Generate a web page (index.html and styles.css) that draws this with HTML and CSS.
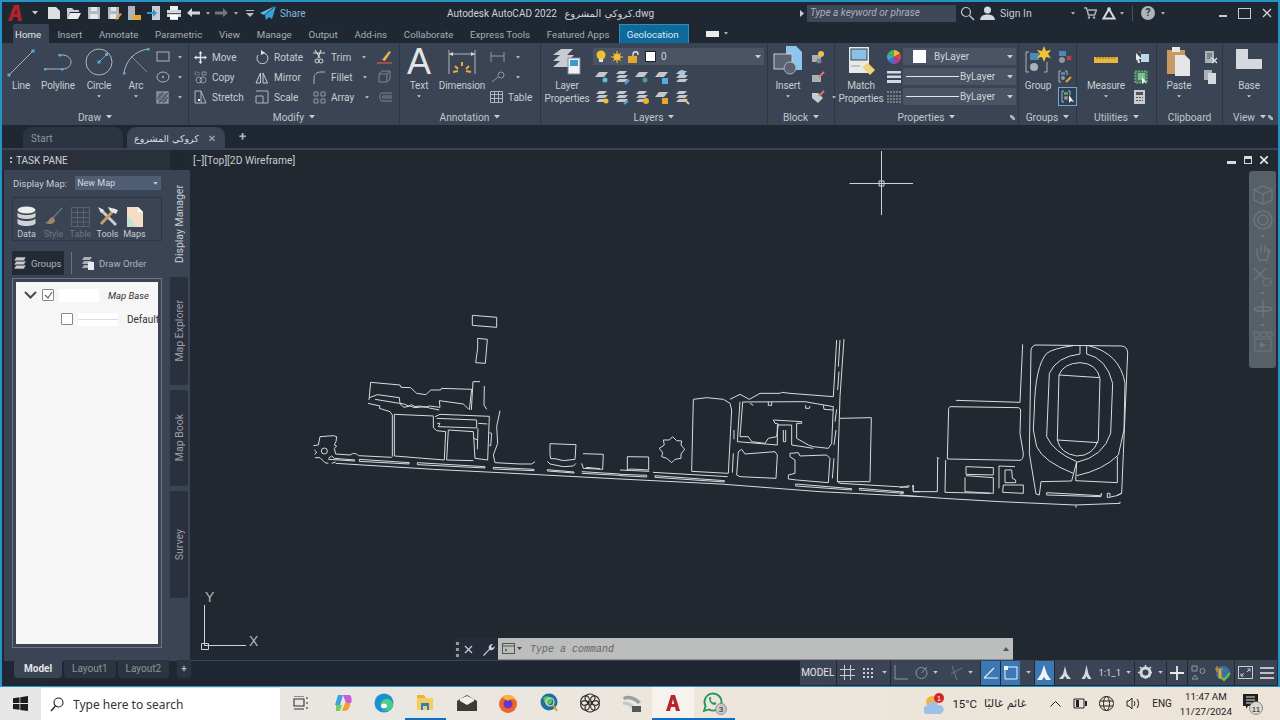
FILE: index.html
```html
<!DOCTYPE html>
<html lang="en">
<head>
<meta charset="utf-8">
<title>Autodesk AutoCAD 2022</title>
<link rel="stylesheet" href="styles.css">
</head>
<body>
<svg class="defs" width="0" height="0">
  <symbol id="stack" viewBox="0 0 16 16"><path d="M5 2h8l-3 3H2zM5 6h9l-3 3H2zM5 10h9l-3 3H2z" fill="#c4c8cd"/></symbol>
  <symbol id="flat" viewBox="0 0 16 16"><path d="M5 3h9l-4 5H1z" fill="#c4c8cd"/></symbol>
  <symbol id="caret" viewBox="0 0 6 4"><path d="M0 0h6L3 3.5z" fill="#c8ccd2"/></symbol>
</svg>
<div class="window">
  <header class="titlebar">
    <div class="qat">
      <svg class="logo" width="16" height="18" viewBox="0 0 16 18"><path d="M1 17 7 1h5l3 16h-4l-.6-4H6.500l-1.500 4zM7.500 10H10L9.300 5z" fill="#b3222a"/></svg>
      <svg class="caret" width="6" height="4"><use href="#caret"/></svg>
      <svg class="qi first" width="16" height="16" viewBox="0 0 16 16"><path d="M2 2h8l4 4v8H2z" fill="#dcdfe2"/></svg>
      <svg class="qi" width="16" height="16" viewBox="0 0 16 16"><path d="M1 3h5l2 2h5v2H4l-3 7z" fill="#c9ccd0"/><path d="M4 8h11l-3 6H1z" fill="#e8e9ea"/></svg>
      <svg class="qi" width="16" height="16" viewBox="0 0 16 16"><path d="M2 2h12v12H2z" fill="#b5b9be"/><path d="M5 2h6v4H5zM4 9h8v5H4z" fill="#e5e6e8"/></svg>
      <svg class="qi" width="16" height="16" viewBox="0 0 16 16"><path d="M2 2h11v12H2z" fill="#b5b9be"/><path d="M5 2h5v4H5zM4 9h6v5H4z" fill="#e5e6e8"/><path d="M9 14l5-6 2 1-5 6z" fill="#e0a24a"/></svg>
      <svg class="qi" width="16" height="16" viewBox="0 0 16 16"><path d="M2 1h7v14H2z" fill="#aeb3b9"/><path d="M7 10h8v5H7z" fill="#e5a72f"/></svg>
      <svg class="qi" width="16" height="16" viewBox="0 0 16 16"><path d="M6 1h8v14H6z" fill="#c9ccd0"/><path d="M1 7h6V4l4 4-4 4V9H1z" fill="#2a9ad0"/></svg>
      <svg class="qi" width="16" height="16" viewBox="0 0 16 16"><path d="M4 1h8v4H4z" fill="#eee"/><path d="M1 5h14v7h-3v3H4v-3H1z" fill="#d5d8db"/><path d="M4 10h8v4H4z" fill="#fff"/><path d="M1 8h14v1H1z" fill="#555"/></svg>
      <svg class="qi" width="15" height="16" viewBox="0 0 15 16"><path d="M6 3 1 8l5 4V9.500h8V6.500H6z" fill="#d4d7da"/></svg>
      <svg class="caret" width="4" height="3"><use href="#caret"/></svg>
      <svg class="qi dim" width="15" height="16" viewBox="0 0 15 16"><path d="M9 3l5 5-5 4V9.500H1V6.500h8z" fill="#6e7680"/></svg>
      <svg class="caret" width="4" height="3"><use href="#caret"/></svg>
      <svg class="qi more" width="8" height="8" viewBox="0 0 8 8"><path d="M0 1h8v1H0zM0 4h8L4 8z" fill="#b9bdc2"/></svg>
      <svg class="qi" width="16" height="14" viewBox="0 0 16 14"><path d="M16 0 5 9l1 5 3-3 3 2z" fill="#3aa2d8"/><path d="M15 0 0 7l4 2z" fill="#5cb7e6"/></svg>
      <span class="share">Share</span>
    </div>
    <div class="app-title">Autodesk AutoCAD 2022 &nbsp;&nbsp;<span class="ar">كروكي المشروع</span>.dwg</div>
    <div class="infocenter">
      <svg class="arrow-r" width="4" height="7" viewBox="0 0 4 7"><path d="M0 0l4 3.500L0 7z" fill="#c8ccd2"/></svg>
      <div class="search-input">Type a keyword or phrase</div>
      <svg class="mag" width="15" height="15" viewBox="0 0 15 15"><circle cx="6" cy="6" r="4.500" fill="none" stroke="#c4c8cd" stroke-width="1.200"/><path d="M9.500 9.500 14 14" stroke="#c4c8cd" stroke-width="1.400"/></svg>
      <svg class="user" width="15" height="14" viewBox="0 0 15 14"><circle cx="7.500" cy="4" r="3.500" fill="#d5d8dc"/><path d="M0 14c1-5 4-5.500 7.500-5.500S14 9 15 14z" fill="#d5d8dc"/></svg>
      <span class="signin">Sign In</span>
      <svg class="caret c1" width="4" height="3"><use href="#caret"/></svg>
      <svg class="cart" width="13" height="12" viewBox="0 0 13 12"><path d="M0 1h2.500l2 7h6l2-5H4" fill="none" stroke="#aeb3b9" stroke-width="1.500"/><circle cx="5" cy="10.500" r="1.200" fill="#aeb3b9"/><circle cx="10" cy="10.500" r="1.200" fill="#aeb3b9"/></svg>
      <svg class="tri" width="14" height="13" viewBox="0 0 14 13"><path d="M7 2 1.500 11.500h11z" fill="none" stroke="#d5d8dc" stroke-width="2"/><circle cx="7" cy="2" r="1.800" fill="#d5d8dc"/></svg>
      <svg class="caret c2" width="4" height="3"><use href="#caret"/></svg>
      <span class="vsep"></span>
      <span class="help">?</span>
      <svg class="caret c3" width="4" height="3"><use href="#caret"/></svg>
    </div>
    <div class="winbtns">
      <span class="wmin"></span><span class="wmax"></span>
      <svg width="10" height="10" viewBox="0 0 10 10"><path d="M1 1l8 8M9 1l-8 8" stroke="#d5d8dc" stroke-width="1.200"/></svg>
    </div>
  </header>

  <nav class="tabs">
    <span class="tab active">Home</span><span class="tab">Insert</span><span class="tab">Annotate</span><span class="tab">Parametric</span><span class="tab">View</span><span class="tab">Manage</span><span class="tab">Output</span><span class="tab">Add-ins</span><span class="tab">Collaborate</span><span class="tab">Express Tools</span><span class="tab">Featured Apps</span><span class="tab geo">Geolocation</span>
    <span class="tabmini"><span class="tabmini-box"></span><svg width="4" height="3"><use href="#caret"/></svg></span>
  </nav>

  <section class="ribbon">
    <div class="panel p-draw">
      <div class="pbody">
        <div class="lg w30"><svg width="30" height="32" viewBox="0 0 30 32"><path d="M3 29 27 5" stroke="#aeb4bb"/><rect x="1.500" y="27.500" width="3" height="3" fill="#59a9d8"/><rect x="25.500" y="3.500" width="3" height="3" fill="#59a9d8"/></svg><span>Line</span></div>
        <div class="lg w44"><svg width="32" height="32" viewBox="0 0 32 32"><path d="M3 23H20C32 23 32 9 20 9h-4" fill="none" stroke="#aeb4bb"/><g fill="#59a9d8"><rect x="2" y="22" width="2.500" height="2.500"/><rect x="19" y="22" width="2.500" height="2.500"/><rect x="17" y="8" width="2.500" height="2.500"/></g></svg><span>Polyline</span></div>
        <div class="lg w36"><svg width="30" height="32" viewBox="0 0 30 32"><circle cx="15" cy="16" r="13" fill="none" stroke="#aeb4bb"/><path d="M15 16l8-8" stroke="#59a9d8"/><rect x="13.500" y="14.500" width="3" height="3" fill="#59a9d8"/><rect x="21" y="7" width="3" height="3" fill="#59a9d8"/></svg><span>Circle</span><svg class="dd" width="4" height="3"><use href="#caret"/></svg></div>
        <div class="lg w38"><svg width="30" height="32" viewBox="0 0 30 32"><path d="M3 27C5 14 14 5 27 3" fill="none" stroke="#aeb4bb"/><path d="M10 10 26 26" stroke="#7e8791"/><g fill="#59a9d8"><rect x="2" y="26" width="2.500" height="2.500"/><rect x="26" y="2" width="2.500" height="2.500"/></g></svg><span>Arc</span><svg class="dd" width="4" height="3"><use href="#caret"/></svg></div>
        <div class="col c-draw">
          <div class="sm"><svg width="14" height="12" viewBox="0 0 14 12"><rect x="1" y="1" width="12" height="9" fill="none" stroke="#aeb4bb"/></svg><svg class="sc" width="4" height="3"><use href="#caret"/></svg></div>
          <div class="sm"><svg width="14" height="12" viewBox="0 0 14 12"><ellipse cx="7" cy="6" rx="6" ry="5" fill="none" stroke="#aeb4bb"/><circle cx="7" cy="6" r="1.200" fill="#59a9d8"/></svg><svg class="sc" width="4" height="3"><use href="#caret"/></svg></div>
          <div class="sm"><svg width="14" height="13" viewBox="0 0 14 13"><rect x="1" y="1" width="11" height="11" fill="#6d7782" stroke="#aeb4bb"/><path d="M1 8l6-7M3 12l9-10M7 12l5-6" stroke="#3a4454"/></svg><svg class="sc" width="4" height="3"><use href="#caret"/></svg></div>
        </div>
      </div>
      <div class="ptitle">Draw<svg width="6" height="4"><use href="#caret"/></svg></div>
    </div>

    <div class="panel p-modify">
      <div class="pbody rows3">
        <div class="sm"><svg width="13" height="13" viewBox="0 0 13 13"><path d="M6.500 0l2 2.500h-1.300V5.800h3.300V4.500l2.500 2-2.500 2V7.200H7.200v3.300h1.300l-2 2.500-2-2.500h1.300V7.200H2.500v1.300L0 6.500l2.500-2v1.300h3.300V2.500H4.500z" fill="#e3e5e8"/></svg><span>Move</span></div>
        <div class="sm"><svg width="14" height="14" viewBox="0 0 14 14"><path d="M9 3A5.500 5.500 0 1 1 3 5" fill="none" stroke="#c8ccd2"/><path d="M6 0l4 3-4 2z" fill="#e3e5e8"/></svg><span>Rotate</span></div>
        <div class="sm"><svg width="13" height="14" viewBox="0 0 13 14"><path d="M2 0l5 8M8 0 5 8M0 3h12" stroke="#d5d8dc" stroke-width="1.100"/><circle cx="4" cy="11" r="2" fill="none" stroke="#d5d8dc"/><circle cx="8" cy="11" r="2" fill="none" stroke="#d5d8dc"/></svg><span>Trim</span><svg class="sc g9" width="4" height="3"><use href="#caret"/></svg></div>
        <div class="sm"><svg width="15" height="14" viewBox="0 0 15 14"><path d="M5 10 12 1l2 1-6 9z" fill="#e7b04b"/><path d="M0 13h15" stroke="#c75a41" stroke-width="1.300"/></svg></div>

        <div class="sm"><svg width="13" height="13" viewBox="0 0 13 13"><path d="M1 1h4v3H1z" fill="none" stroke="#8f97a1" stroke-dasharray="1 1"/><circle cx="5" cy="9" r="3" fill="none" stroke="#8f97a1"/><circle cx="9" cy="9" r="3" fill="none" stroke="#8f97a1"/><path d="M8 1h4v3H8z" fill="none" stroke="#8f97a1"/></svg><span>Copy</span></div>
        <div class="sm"><svg width="14" height="13" viewBox="0 0 14 13"><path d="M5.500 2 1 12h4.500zM8 2l4.500 10H8z" fill="none" stroke="#c8ccd2"/></svg><span>Mirror</span></div>
        <div class="sm"><svg width="13" height="14" viewBox="0 0 13 14"><path d="M1 14V8c0-4 3-6 7-6h4" fill="none" stroke="#aeb4bb"/></svg><span>Fillet</span><svg class="sc g9" width="4" height="3"><use href="#caret"/></svg></div>
        <div class="sm"><svg width="15" height="14" viewBox="0 0 15 14"><path d="M2 4h8v8H2zM2 4l3-3h8v8l-3 3M10 4l3-3" fill="none" stroke="#7d8590"/></svg></div>

        <div class="sm"><svg width="13" height="14" viewBox="0 0 13 14"><path d="M1 1h6v12H1zM7 1l5 12H7" fill="none" stroke="#aeb4bb"/><rect x="4" y="9" width="2" height="2" fill="#fff"/></svg><span>Stretch</span></div>
        <div class="sm"><svg width="14" height="14" viewBox="0 0 14 14"><path d="M1 6h7v7H1zM1 1h12v12H8" fill="none" stroke="#aeb4bb"/></svg><span>Scale</span></div>
        <div class="sm"><svg width="13" height="13" viewBox="0 0 13 13"><path d="M1 1h4v4H1zM8 1h4v4H8zM1 8h4v4H1zM8 8h4v4H8z" fill="none" stroke="#8f97a1"/></svg><span>Array</span><svg class="sc g9" width="4" height="3"><use href="#caret"/></svg></div>
        <div class="sm"><svg width="15" height="12" viewBox="0 0 15 12"><path d="M15 2H5C2 2 2 10 5 10h10M15 5H6C5 5 5 7 6 7h9" fill="none" stroke="#7d8590"/></svg></div>
      </div>
      <div class="ptitle">Modify<svg width="6" height="4"><use href="#caret"/></svg></div>
    </div>

    <div class="panel p-annot">
      <div class="pbody">
        <div class="lg w36"><span class="bigA">A</span><span>Text</span><svg class="dd" width="4" height="3"><use href="#caret"/></svg></div>
        <div class="lg w50"><svg width="28" height="32" viewBox="0 0 28 32"><path d="M1 4v24M27 4v24" stroke="#aeb4bb"/><path d="M1 8h26" stroke="#aeb4bb"/><path d="M1 8l4-2v4zM27 8l-4-2v4z" fill="#d5d8dc"/><path d="M14 16v4M7 20l3 3M21 20l-3 3M5 26l5-1M23 26l-5-1" stroke="#e6ad3c" stroke-width="2"/></svg><span>Dimension</span></div>
        <div class="col c-annot">
          <div class="sm"><svg width="15" height="12" viewBox="0 0 15 12"><path d="M1 1v10M14 1v10M1 5h13" stroke="#8f97a1"/></svg><svg class="sc g9" width="4" height="3"><use href="#caret"/></svg></div>
          <div class="sm"><svg width="15" height="13" viewBox="0 0 15 13"><path d="M2 11 8 6" stroke="#8f97a1"/><circle cx="11" cy="4" r="3" fill="none" stroke="#8f97a1"/></svg><svg class="sc g9" width="4" height="3"><use href="#caret"/></svg></div>
          <div class="sm"><svg width="13" height="12" viewBox="0 0 13 12"><path d="M.5.500h12v11H.500zM.5 3.500h12M.5 7.500h12M4.500.5v11M8.500.5v11" fill="none" stroke="#aeb4bb"/></svg><span>Table</span></div>
        </div>
      </div>
      <div class="ptitle">Annotation<svg width="6" height="4"><use href="#caret"/></svg></div>
    </div>

    <div class="panel p-layers">
      <div class="pbody">
        <div class="lg w52"><svg width="30" height="32" viewBox="0 0 30 32"><path d="M9 3h12l-6 6H1zM8 9h14l-6 6H1zM8 15h14l-6 6H1z" fill="#c8ccd2"/><rect x="16" y="12" width="12" height="16" fill="#f0f1f2" stroke="#7e8791"/><rect x="18" y="14" width="8" height="6" fill="#3b9ad0"/></svg><span>Layer</span><span>Properties</span></div>
        <div class="layerctl">
          <div class="combo combo-layer">
            <svg width="10" height="13" viewBox="0 0 10 13"><circle cx="5" cy="5" r="4.500" fill="#f0c12c"/><rect x="3" y="9" width="4" height="3" fill="#dfe1e3"/></svg>
            <svg width="12" height="12" viewBox="0 0 12 12"><circle cx="6" cy="6" r="3.500" fill="#f0c12c"/><path d="M6 0v12M0 6h12M2 2l8 8M10 2l-8 8" stroke="#f0c12c"/></svg>
            <svg width="12" height="12" viewBox="0 0 12 12"><rect y="5" width="9" height="7" fill="#e5a72f"/><path d="M5 5V3c0-3 5-3 5 0v1" fill="none" stroke="#e5e6e8" stroke-width="1.300"/></svg>
            <span class="swatch"></span><span class="lname">0</span>
            <svg class="comboc" width="6" height="4"><use href="#caret"/></svg>
          </div>
          <div class="layerrow">
            <svg width="16" height="16"><use href="#flat"/><circle cx="11" cy="11" r="2.500" fill="#58c4d8"/></svg>
            <svg width="16" height="16"><use href="#stack"/><path d="M11 15l4-4" stroke="#59a9d8" stroke-width="2"/></svg>
            <svg width="16" height="16"><use href="#flat"/><circle cx="11" cy="11" r="2.500" fill="#4ba08c"/></svg>
            <svg width="16" height="16"><use href="#flat"/><rect x="8" y="9" width="6" height="6" fill="#4fb0e0"/></svg>
            <svg width="16" height="16"><use href="#stack"/><circle cx="8" cy="4" r="3" fill="#9fc7e6"/></svg>
          </div>
          <div class="layerrow">
            <svg width="16" height="16"><use href="#stack"/><circle cx="12" cy="12" r="2.500" fill="#f0c12c"/></svg>
            <svg width="16" height="16"><use href="#stack"/><path d="M10 15l4-3" stroke="#59a9d8" stroke-width="2"/></svg>
            <svg width="16" height="16"><use href="#stack"/><circle cx="12" cy="12" r="3" fill="#e8b13a"/></svg>
            <svg width="16" height="16"><use href="#flat"/><rect x="8" y="9" width="6" height="6" fill="#e5a72f"/></svg>
            <svg width="16" height="16"><use href="#stack"/><path d="M10 10l5 5" stroke="#e5c87a" stroke-width="2"/></svg>
          </div>
        </div>
      </div>
      <div class="ptitle">Layers<svg width="6" height="4"><use href="#caret"/></svg></div>
    </div>

    <div class="panel p-block">
      <div class="pbody">
        <div class="lg w38"><svg width="30" height="32" viewBox="0 0 30 32"><path d="M13 0h10l6 6v18H13z" fill="#8cc6ee"/><rect x="1" y="8" width="18" height="15" fill="#5a6370" stroke="#c8ccd2"/><circle cx="17" cy="22" r="6" fill="#5a6370" stroke="#aeb4bb"/></svg><span>Insert</span><svg class="dd" width="4" height="3"><use href="#caret"/></svg></div>
        <div class="col c-block">
          <div class="sm"><svg width="14" height="14" viewBox="0 0 14 14"><rect x="1" y="5" width="9" height="7" fill="#aab0b7"/><circle cx="10" cy="4" r="3" fill="#ecc352"/><circle cx="8" cy="11" r="2.500" fill="#7d8590"/></svg></div>
          <div class="sm"><svg width="14" height="14" viewBox="0 0 14 14"><rect x="1" y="5" width="9" height="7" fill="#aab0b7"/><path d="M8 7l5-5" stroke="#d87a68" stroke-width="2"/></svg></div>
          <div class="sm"><svg width="14" height="14" viewBox="0 0 14 14"><path d="M1 3h6l5 5-5 5-6-5z" fill="#c8ccd2"/><path d="M8 6l5-5" stroke="#d87a68" stroke-width="2"/></svg><svg class="sc g6" width="4" height="3"><use href="#caret"/></svg></div>
        </div>
      </div>
      <div class="ptitle">Block<svg width="6" height="4"><use href="#caret"/></svg></div>
    </div>

    <div class="panel p-props">
      <div class="pbody">
        <div class="lg w50"><svg width="30" height="32" viewBox="0 0 30 32"><rect x="3" y="1" width="20" height="26" fill="#e8e9ea"/><rect x="5" y="3" width="16" height="11" fill="#8bc0e6" stroke="#3a4454"/><path d="M16 21l6-4 7 7-5 5z" fill="#eed47a"/><path d="M5 20h9" stroke="#999"/></svg><span>Match</span><span>Properties</span></div>
        <div class="propcol">
          <svg width="14" height="14" viewBox="0 0 14 14"><path d="M7 7V0a7 7 0 0 1 6 3.500z" fill="#e8b93a"/><path d="M7 7l6-3.500a7 7 0 0 1 0 7z" fill="#d44"/><path d="M7 7l6 3.500A7 7 0 0 1 7 14z" fill="#b040a0"/><path d="M7 7v7a7 7 0 0 1-6-3.500z" fill="#4070d0"/><path d="M7 7 1 10.500a7 7 0 0 1 0-7z" fill="#40a8c0"/><path d="M7 7 1 3.500A7 7 0 0 1 7 0z" fill="#50b050"/></svg>
          <svg width="14" height="14" viewBox="0 0 14 14"><path d="M0 1h14v2.500H0zM0 5.500h14V8H0zM0 10h14v3H0z" fill="#d5d8dc"/></svg>
          <svg width="14" height="14" viewBox="0 0 14 14"><path d="M0 2h14M0 6h14M0 9h14M0 12h14" stroke="#aeb4bb" stroke-dasharray="2 1"/></svg>
        </div>
        <div class="combos">
          <div class="combo"><span class="swatch big"></span><span class="cname">ByLayer</span><svg class="comboc" width="6" height="4"><use href="#caret"/></svg></div>
          <div class="combo"><span class="lw"></span><span class="cname2">ByLayer</span><svg class="comboc" width="6" height="4"><use href="#caret"/></svg></div>
          <div class="combo"><span class="lw"></span><span class="cname2">ByLayer</span><svg class="comboc" width="6" height="4"><use href="#caret"/></svg></div>
        </div>
      </div>
      <div class="ptitle">Properties<svg width="6" height="4"><use href="#caret"/></svg><svg class="launch" width="5" height="5" viewBox="0 0 5 5"><path d="M0 0h2L5 3V5H3L0 2z" fill="#aeb4bb"/></svg></div>
    </div>

    <div class="panel p-groups">
      <div class="pbody">
        <div class="lg w34"><svg width="28" height="32" viewBox="0 0 28 32"><path d="M5 6H2v20h3M20 26h3V16" fill="none" stroke="#aeb4bb"/><rect x="6" y="7" width="9" height="7" fill="#4f87b8"/><circle cx="10" cy="21" r="4" fill="#aab0b7"/><path d="M20 0l2 5 5-1-3 4 3 4-5-1-2 5-2-5-5 1 3-4-3-4 5 1z" fill="#f1c33c"/></svg><span>Group</span></div>
        <div class="col c-groups">
          <div class="sm"><svg width="14" height="14" viewBox="0 0 14 14"><rect x="1" y="1" width="7" height="5" fill="#4f87b8"/><circle cx="4" cy="10" r="3" fill="#8f97a1"/><path d="M9 6l4 4M13 6l-4 4" stroke="#d44" stroke-width="1.500"/></svg></div>
          <div class="sm"><svg width="14" height="14" viewBox="0 0 14 14"><path d="M3 1H1v11h2M7 1h2v4" fill="none" stroke="#aeb4bb"/><rect x="3" y="2" width="4" height="3" fill="#4f87b8"/><circle cx="5" cy="8" r="2" fill="#8f97a1"/><path d="M8 12l5-5" stroke="#e5a72f" stroke-width="2"/></svg></div>
          <div class="sm sel"><svg width="14" height="14" viewBox="0 0 14 14"><path d="M3 1H1v11h2M7 1h2v4" fill="none" stroke="#aeb4bb"/><rect x="3" y="2" width="4" height="3" fill="#4fa07a"/><circle cx="5" cy="8" r="2" fill="#8f97a1"/><path d="M8 5v8l2-2 3 1z" fill="#f2f2f2"/></svg></div>
        </div>
      </div>
      <div class="ptitle">Groups<svg width="6" height="4"><use href="#caret"/></svg></div>
    </div>

    <div class="panel p-util">
      <div class="pbody">
        <div class="lg w50 top-gap"><svg width="26" height="32" viewBox="0 0 26 32"><rect x="1" y="11" width="24" height="6" fill="#e8b93a"/><path d="M4 11v2M7 11v2M10 11v2M13 11v2M16 11v2M19 11v2M22 11v2" stroke="#8a6a1a"/></svg><span>Measure</span><svg class="dd" width="4" height="3"><use href="#caret"/></svg></div>
        <div class="col c-util">
          <div class="sm"><svg width="15" height="14" viewBox="0 0 15 14"><path d="M2 3l6 6-3 0 1 4-2 0-1-4-1 2z" fill="#e8e9ea"/><rect x="7" y="4" width="8" height="8" fill="#bcd9ec"/><path d="M4 0l1 2 2-.5-1 1.500z" fill="#f1c33c"/></svg></div>
          <div class="sm"><svg width="14" height="14" viewBox="0 0 14 14"><rect x="1" y="1" width="12" height="12" fill="#4c7a5a" stroke="#6fc08a" stroke-dasharray="2 1"/><rect x="4" y="3" width="7" height="7" fill="#7bc08f"/><path d="M8 7v7l2-2 3 1z" fill="#f2f2f2"/></svg></div>
          <div class="sm"><svg width="11" height="14" viewBox="0 0 11 14"><rect width="11" height="14" fill="#c8ccd2"/><rect x="2" y="2" width="7" height="3" fill="#555"/><path d="M2 7h2v1H2zM5 7h2v1H5zM8 7h1v1H8zM2 10h2v1H2zM5 10h2v1H5zM8 10h1v1H8z" fill="#555"/></svg></div>
        </div>
      </div>
      <div class="ptitle">Utilities<svg width="6" height="4"><use href="#caret"/></svg></div>
    </div>

    <div class="panel p-clip">
      <div class="pbody">
        <div class="lg w44"><svg width="24" height="32" viewBox="0 0 24 32"><rect x="0" y="4" width="18" height="24" fill="#c79a63"/><rect x="5" y="1" width="8" height="5" fill="#e5e6e8"/><path d="M8 9h10l5 5v16H8z" fill="#e5e6e8"/></svg><span>Paste</span><svg class="dd" width="4" height="3"><use href="#caret"/></svg></div>
        <div class="col c-clip">
          <div class="sm"><svg width="14" height="14" viewBox="0 0 14 14"><rect x="1" y="1" width="9" height="12" fill="#aab0b7"/><path d="M3 4h5M3 6h5M3 8h3" stroke="#555"/><path d="M8 8l5 5M13 8l-5 5" stroke="#e5e6e8" stroke-width="1.200"/></svg></div>
          <div class="sm"><svg width="12" height="14" viewBox="0 0 12 14"><rect x="0" y="0" width="8" height="10" fill="#aab0b7"/><rect x="4" y="3" width="8" height="11" fill="#d5d8dc"/></svg></div>
        </div>
      </div>
      <div class="ptitle">Clipboard</div>
    </div>

    <div class="panel p-view">
      <div class="pbody">
        <div class="lg w52"><svg width="28" height="32" viewBox="0 0 28 32"><path d="M1 3h12v10h14v10H1z" fill="#d5d8dc"/></svg><span>Base</span><svg class="dd" width="4" height="3"><use href="#caret"/></svg></div>
      </div>
      <div class="ptitle">View<svg width="6" height="4"><use href="#caret"/></svg><svg class="launch" width="5" height="5" viewBox="0 0 5 5"><path d="M0 0h2L5 3V5H3L0 2z" fill="#aeb4bb"/></svg></div>
    </div>
  </section>

  <div class="doctabs">
    <span class="doctab">Start</span>
    <span class="doctab cur"><span class="ar">كروكي المشروع</span><span class="dx">✕</span></span>
    <span class="docplus">+</span>
  </div>

  <main class="workspace">
    <aside class="taskpane">
      <div class="tp-title"><span class="tp-grip"></span>TASK PANE</div>
      <div class="tp-main">
        <div class="tp-body">
          <div class="dm-row"><span>Display Map:</span><span class="dm-select">New Map<svg width="5" height="3"><use href="#caret"/></svg></span></div>
          <div class="dm-tools">
            <div class="dmt"><svg width="19" height="22" viewBox="0 0 19 22"><ellipse cx="9.500" cy="4" rx="9" ry="3.500" fill="#eceded"/><path d="M.5 6v4c0 4 18 4 18 0V6c0 4-18 4-18 0zM.5 12v5c0 4 18 4 18 0v-5c0 4-18 4-18 0z" fill="#d0d2d5"/></svg><span>Data</span></div>
            <div class="dmt off"><svg width="20" height="22" viewBox="0 0 20 22"><path d="M18 2 9 12" stroke="#6d757f" stroke-width="1.300"/><path d="M9 11c-4 0-4 5-8 6 5 2 10 1 10-3z" fill="#a08668"/></svg><span>Style</span></div>
            <div class="dmt off"><svg width="19" height="22" viewBox="0 0 19 22"><path d="M.5 1.500h18v19H.5zM.5 6.500h18M.5 11.500h18M.5 16h18M6.500 1.500v19M12.500 1.500v19" fill="none" stroke="#596270"/></svg><span>Table</span></div>
            <div class="dmt"><svg width="22" height="22" viewBox="0 0 22 22"><path d="M4 4l15 15" stroke="#c8ccd2" stroke-width="3"/><path d="M18 3 4 18" stroke="#c79a63" stroke-width="3"/><path d="M11 1l10 3-2 4-6-3z" fill="#e5e6e8"/><path d="M1 1l6 3-3 3z" fill="#e5e6e8"/></svg><span>Tools</span></div>
            <div class="dmt"><svg width="18" height="22" viewBox="0 0 18 22"><path d="M1 1h11l5 5v15H1z" fill="#f5dcc7"/><path d="M1 11c5 0 5 5 9 10H1z" fill="#bfe3d5"/><path d="M12 1v5h5z" fill="#fff"/></svg><span>Maps</span></div>
          </div>
          <div class="dm-tabs">
            <span class="dm-tab on"><svg width="14" height="14" viewBox="0 0 14 14"><path d="M3 1h10l-2 4H1zM3 5h10l-2 4H1zM3 9h10l-2 4H1z" fill="#c8ccd2" stroke="#2a3038" stroke-width=".6"/></svg>Groups</span>
            <span class="dm-sep"></span>
            <span class="dm-tab"><svg width="14" height="14" viewBox="0 0 14 14"><path d="M3 1h8l-2 3H1zM3 5h8l-2 3H1zM3 9h8l-2 3H1z" fill="#aab0b7"/><rect x="7" y="6" width="6" height="8" fill="#e8e9ea"/></svg>Draw Order</span>
          </div>
          <div class="tree-frame">
            <div class="tree">
              <div class="tr r1"><svg width="13" height="8" viewBox="0 0 13 8"><path d="M1 1l5.500 5.500L12 1" fill="none" stroke="#454a50" stroke-width="2"/></svg><span class="cb chk"><svg width="9" height="8" viewBox="0 0 9 8"><path d="M1 4l3 3 4-6" fill="none" stroke="#666" stroke-width="1.200"/></svg></span><span class="white-swatch"></span><em>Map Base</em></div>
              <div class="tr r2"><span class="cb"></span><span class="white-swatch line"></span><span class="def">Default</span></div>
            </div>
          </div>
        </div>
        <div class="tp-side">
          <span class="stab on"><b>Display Manager</b></span>
          <span class="stab s2"><b>Map Explorer</b></span>
          <span class="stab s3"><b>Map Book</b></span>
          <span class="stab s4"><b>Survey</b></span>
        </div>
      </div>
    </aside>

    <section class="canvas">
      <div class="vp-label">[−][Top][2D Wireframe]</div>
      <svg class="drawing" width="1086" height="510" viewBox="190 150 1086 510">
        <g class="cad" transform="translate(300 300) scale(.33333)">
          <path d="M517 46 555 49 590 52V82L517 76ZM533 115 562 118 556 190 527 188 533 145Z"/>
          <path d="M207 300 212 247 300 255 303 262 332 263 350 280 378 284 392 270 422 270 424 265 515 268 508 330"/>
          <path d="M208 293 232 284 298 293 300 310 312 312 325 318 335 314 345 320 360 318 375 322 388 318 420 322 418 302 490 312 505 327"/>
          <path d="M204 310 240 318 238 325 270 335 277 345V470M225 298 298 310 312 322 330 318 345 323 375 320 388 324 418 330"/>
          <path d="M514 330 519 245H540M553 258 552 315 560 328M600 332 590 380 593 430 580 465 585 488 660 492 695 492 705 485"/>
          <path d="M283 343 400 348V383L410 392 437 395 433 480 283 468Z"/>
          <path d="M405 350 420 343 568 349 563 480 525 475 520 395 445 390 440 480 520 482M410 355 530 360V384L415 380 420 370 412 370"/>
          <path d="M535 370 562 372M534 385 532 448M522 415 532 420M568 398 575 400 572 438 568 435"/>
          <path d="M40 437 55 435 60 410 100 407 110 410 108 425 103 435 110 438 103 445 107 462 150 465 160 460 170 462 175 467 275 472"/>
          <circle cx="73" cy="453" r="9"/>
          <path d="M43 450 50 456 44 464M45 473H60L75 488 85 490M85 475 95 468 103 475 165 480M95 490 107 486M85 478 165 483"/>
          <path d="M107 490 400 508 600 518 960 537"/>
          <path d="M178 478 328 488 327 492 178 484ZM352 488 555 500V504L352 494ZM580 502 702 508V512L580 507ZM742 509 822 516V519L742 513ZM845 515 960 522M845 520 960 526"/>
          <path d="M750 431 828 434 825 478 790 482 765 476H752L750 463ZM742 484 750 492 790 500 820 498 828 490"/>
          <path d="M849 461 910 463 908 508 850 505 845 490M858 502 900 506"/>
        </g>
        <g class="cad" transform="translate(620 330) scale(.33333)">
          <path d="M0 447 300 462 600 485 900 500"/>
          <path d="M105 437 313 452V456L105 442ZM527 462 695 476V480L527 468ZM718 475 850 486V490L718 480ZM0 433 80 436V441L0 437Z"/>
          <path d="M22 380 86 381V420L30 417 22 420ZM0 420 88 424"/>
          <path d="M158 320 148 330 130 330 133 345 118 355 128 368 125 380 140 385 155 398 165 388 183 385 183 372 194 358 183 345 185 333 170 332Z"/>
          <path d="M215 424 220 208 260 203 310 208 330 220 335 240 325 430ZM99 427 323 440"/>
          <path d="M330 208 360 193 388 208 420 190H480L485 187 510 190 640 200 650 30"/>
          <path d="M672 27 660 200 652 455H750L754 263 660 265M653 455 660 460 865 472 868 468M880 465V485H900"/>
          <path d="M368 216 555 215 640 230 635 340 625 355 580 350 565 345 530 325V280H545V275L460 270 465 280 475 282 470 320 445 325 435 340 395 335 385 320H360Z"/>
          <path d="M360 215 352 335 472 345V285H515V345L580 355M490 300V335H497V300"/>
          <path d="M342 300V328M340 370 337 428M642 385 637 445M648 300 642 345M650 238 645 275M657 125 653 180M660 30 655 110"/>
          <path d="M355 365 365 358 375 372 465 365 472 375 468 445 360 440 350 435Z"/>
          <path d="M510 370 535 368 540 378 620 375 630 385 625 458 530 450 505 447V435L525 430V390L510 380Z"/>
          <path d="M390 220 400 226M445 216V226H455V216M557 226V235H568L570 228M610 226 612 238 640 240"/>
        </g>
        <g class="cad" transform="translate(900 330) scale(.33333)">
          <path d="M405 45 665 48Q683 50 683 70L670 370 665 490 650 497 622 503V490M405 45Q395 48 393 60L388 370 408 492 418 495 423 455 515 453"/>
          <path d="M540 45V72Q470 80 448 130L440 320Q460 365 530 395L515 453"/>
          <path d="M520 47Q460 55 440 70 405 110 403 240L400 300 410 350Q430 395 520 430"/>
          <path d="M560 45V72Q620 85 638 160L632 310Q610 380 530 397L527 452 652 458V380"/>
          <path d="M565 47Q660 70 675 160L672 300 655 375Q610 420 530 437"/>
          <path d="M477 135Q490 100 540 98 590 100 600 145L595 330Q580 378 530 378 480 370 472 330ZM477 135 600 143M472 330 595 338"/>
          <path d="M168 211 360 217 368 43"/>
          <path d="M150 230 355 233Q362 235 362 240L360 310 370 370Q370 390 360 391L142 387 146 235Z"/>
          <path d="M137 390 135 487 270 490M198 410 280 413V435L198 433ZM195 442V485L280 490V443L198 437M297 408 345 410M297 408V475"/>
          <path d="M315 420H335L337 445 347 450V458H315ZM310 465H370V490L308 487Z"/>
          <path d="M110 383 118 385M113 385 112 485H40L38 465M0 473 28 467M0 490 10 485"/>
          <path d="M0 495 130 505 300 515 525 525 660 520V515M528 525V533"/>
          <path d="M440 488 600 497 605 490 603 500 440 495ZM622 490H630V500M650 497 665 490"/>
        </g>
        <path class="xhair" d="M849.500 183.500H913M881.500 151V215M879 181h5v5h-5z"/>
        <path class="ucs" d="M204.500 605V645.500H246M201.500 643.500h7v6h-7z"/>
        <text class="ucs-t" x="205" y="602">Y</text>
        <text class="ucs-t" x="249" y="646">X</text>
      </svg>
      <div class="vp-ctrl">
        <span class="vmin"></span><span class="vmax"></span>
        <svg width="8" height="8" viewBox="0 0 8 8"><path d="M0 0l8 8M8 0 0 8" stroke="#e5e6e8" stroke-width="1.600"/></svg>
      </div>
      <div class="navbar">
        <svg width="20" height="20" viewBox="0 0 20 20"><path d="M10 1 19 5v10l-9 4-9-4V5zM1 5l9 4 9-4M10 9v10" fill="none" stroke="#6e767e" stroke-width="1.200"/></svg>
        <svg width="20" height="20" viewBox="0 0 20 20"><circle cx="10" cy="10" r="9" fill="none" stroke="#6e767e" stroke-width="1.400"/><circle cx="10" cy="10" r="5" fill="none" stroke="#6e767e" stroke-width="1.400"/></svg>
        <i class="navdot"></i>
        <svg width="20" height="20" viewBox="0 0 20 20"><path d="M4 11V6M8 10V3M12 10V3M15 11V6M4 11l2 7h8l3-10" fill="none" stroke="#6e767e" stroke-width="1.400"/></svg>
        <svg width="20" height="20" viewBox="0 0 20 20"><path d="M1 1l12 12M13 1 1 13" stroke="#6e767e" stroke-width="1.200"/><circle cx="14" cy="15" r="4" fill="none" stroke="#6e767e" stroke-width="1.200"/></svg>
        <i class="navdot"></i>
        <svg width="20" height="20" viewBox="0 0 20 20"><path d="M10 1v18M1 10c2-3 16-3 18 0-2 3-16 3-18 0z" fill="none" stroke="#6e767e" stroke-width="1.400"/></svg>
        <i class="navdot"></i>
        <svg width="20" height="22" viewBox="0 0 20 22"><path d="M1 1h5v5H1zM8 1h5v5H8zM15 1h4v5h-4zM2 8h16v12H2z" fill="none" stroke="#6e767e"/><path d="M7 11l6 3-6 3z" fill="#6e767e"/></svg>
      </div>
      <div class="cmdline">
        <div class="cmd-tools">
          <span class="cmd-grip"></span>
          <svg width="9" height="9" viewBox="0 0 9 9"><path d="M1 1l7 7M8 1 1 8" stroke="#c8ccd2" stroke-width="1.300"/></svg>
          <svg class="wrench" width="13" height="13" viewBox="0 0 13 13"><path d="M1 12 7 6C6 3 8 1 11 1L9 3.500 10.500 5 13 3c0 3-3 5-5.500 4L2 13z" fill="#c8ccd2"/></svg>
        </div>
        <div class="cmd-input">
          <svg width="13" height="11" viewBox="0 0 13 11"><rect x=".5" y=".5" width="12" height="10" fill="none" stroke="#555"/><path d="M.5 3h12M3 6l2 1-2 1" fill="none" stroke="#555"/></svg>
          <svg width="5" height="3"><path d="M0 0h5L2.500 3z" fill="#444"/></svg>
          <span class="cmd-text">Type a command</span>
          <svg class="cmd-up" width="6" height="4"><path d="M0 4h6L3 0z" fill="#555"/></svg>
        </div>
      </div>
    </section>
  </main>

  <footer class="statusbar">
    <div class="ltabs">
      <span class="ltab on">Model</span><span class="ltab">Layout1</span><span class="ltab">Layout2</span><span class="ltab plus">+</span>
    </div>
    <div class="stools">
      <span class="sg sg-model"><span class="model">MODEL</span></span>
      <span class="sg"><svg width="15" height="15" viewBox="0 0 15 15"><path d="M4.500 0v15M10.500 0v15M0 4.500h15M0 10.500h15" stroke="#c8ccd2"/></svg><svg class="dots" width="12" height="12" viewBox="0 0 12 12"><path d="M1 1h2v2H1zM5 1h2v2H5zM9 1h2v2H9zM1 5h2v2H1zM5 5h2v2H5zM9 5h2v2H9zM1 9h2v2H1zM5 9h2v2H5zM9 9h2v2H9z" fill="#c8ccd2"/></svg><svg class="sd wide" width="5" height="3"><use href="#caret"/></svg></span>
      <span class="sg polar"><svg width="14" height="15" viewBox="0 0 14 15"><path d="M1 0v14h13" fill="none" stroke="#8f97a1"/></svg><svg class="ml" width="13" height="13" viewBox="0 0 13 13"><circle cx="6.500" cy="7" r="5.500" fill="none" stroke="#8f97a1"/><path d="M6.500 7 12 1" stroke="#8f97a1"/></svg><svg class="sd" width="5" height="3"><use href="#caret"/></svg><svg class="ml2" width="13" height="14" viewBox="0 0 13 14"><path d="M2 0l5 14M12 2 1 8" stroke="#6f7782"/></svg><svg class="sd" width="5" height="3"><use href="#caret"/></svg></span>
      <span class="hl"><svg width="14" height="13" viewBox="0 0 14 13"><path d="M0 12h14M0 12 10 2" stroke="#eef3f8" stroke-width="1.200"/></svg></span>
      <span class="hl h2"><svg width="14" height="14" viewBox="0 0 14 14"><path d="M1 1h12v12H1z" fill="none" stroke="#eef3f8"/><path d="M0 0h4v4H0z" fill="#eef3f8"/></svg></span>
      <span class="sg gap-l"><svg class="sd" width="5" height="3"><use href="#caret"/></svg></span>
      <span class="hl h3"><svg width="15" height="16" viewBox="0 0 15 16"><path d="M7 0 10 9l4 6H9L7 12 5 15H0l4-6z" fill="#eef3f8"/></svg></span>
      <span class="sg"><svg width="15" height="15" viewBox="0 0 15 15"><path d="M7 1 9 9l4 5H9L7 11 5 14H1l4-5z" fill="#d5d8dc"/></svg><svg class="ml" width="13" height="15" viewBox="0 0 13 15"><path d="M6.500 0 8.500 9l3 5H8L6.500 11 5 14H1.500l3-5z" fill="#d5d8dc"/></svg><span class="scale">1:1_1</span><svg class="sd" width="5" height="3"><use href="#caret"/></svg></span>
      <span class="sg"><svg width="15" height="15" viewBox="0 0 15 15"><circle cx="7.500" cy="7.500" r="4.500" fill="none" stroke="#d5d8dc" stroke-width="3"/><path d="M7.500 0v15M0 7.500h15M2 2l11 11M13 2 2 13" stroke="#d5d8dc" stroke-width="1.500" stroke-dasharray="2.500 9"/></svg><svg class="sd" width="5" height="3"><use href="#caret"/></svg></span>
      <span class="sg"><svg width="14" height="14" viewBox="0 0 14 14"><path d="M7 0v14M0 7h14" stroke="#e8e9ea" stroke-width="1.800"/></svg></span>
      <span class="sg"><svg width="15" height="15" viewBox="0 0 15 15"><path d="M1 1h5v5H1z" fill="none" stroke="#8f97a1"/><circle cx="11.500" cy="6" r="2.500" fill="none" stroke="#8f97a1"/><path d="M4 10l3 4H1z" fill="none" stroke="#8f97a1"/></svg><svg class="ml" width="18" height="18" viewBox="0 0 18 18"><circle cx="10" cy="9" r="7" fill="#3c6fa5"/><path d="M2 5h8M4 2v6M6 6h2v8H6z" fill="#e5a72f" stroke="#e5a72f"/><path d="M8 13l3 3 6-7" fill="none" stroke="#6fc040" stroke-width="2"/></svg></span>
      <span class="sg"><svg width="15" height="13" viewBox="0 0 15 13"><rect x=".5" y=".5" width="14" height="12" fill="none" stroke="#c8ccd2"/><path d="M3 10l3-3M3 10V7.500M3 10h2.500M12 3 9 6M12 3v2.500M12 3H9.500" stroke="#c8ccd2"/></svg><svg class="ml" width="14" height="12" viewBox="0 0 14 12"><path d="M0 1h14M0 6h14M0 11h14" stroke="#e8e9ea" stroke-width="1.600"/></svg></span>
    </div>
  </footer>
</div>

<div class="taskbar">
  <span class="start"><svg width="15" height="15" viewBox="0 0 15 15"><path d="M0 2.200 6.500 1.300V7H0zM7.300 1.200 15 0V7H7.300zM0 7.900H6.500V13.800L0 12.900zM7.300 7.900H15V15L7.300 13.900z" fill="#1d1d1d"/></svg></span>
  <div class="searchbox"><svg width="14" height="15" viewBox="0 0 14 15"><circle cx="8.500" cy="5.500" r="4.500" fill="none" stroke="#222" stroke-width="1.100"/><path d="M5.500 9 1 14" stroke="#222" stroke-width="1.300"/></svg><span>Type here to search</span></div>
  <div class="tb-apps">
    <span class="tbi"><svg width="15" height="14" viewBox="0 0 15 14"><path d="M1 0h10M1 13h10M1 3h10v7H1zM14 1v2M14 6v2M14 11v2" fill="none" stroke="#333" stroke-width="1.100"/></svg></span>
    <span class="tbi"><svg width="20" height="20" viewBox="0 0 20 20"><path d="M5 2h5L7 12H2z" fill="#3f9fe0"/><path d="M10 2h6c3 0 3 6 2 8l-5 0z" fill="#c65ce0"/><path d="M3 12h6l-2 6H3z" fill="#6fcf60"/><path d="M9 18l3-8h5c1 3-2 8-5 8z" fill="#f0a030"/></svg></span>
    <span class="tbi"><svg width="20" height="20" viewBox="0 0 20 20"><circle cx="10" cy="10" r="9.500" fill="#1b8fd0"/><path d="M19 12c-1 5-8 8-12 5 3 1 6 0 6-3H7c-2-5 3-9 7-8 4 1 5 4 5 6z" fill="#47d080"/><ellipse cx="10" cy="13" rx="3" ry="2.500" fill="#fff"/></svg></span>
    <span class="tbi on"><svg width="18" height="17" viewBox="0 0 18 17"><path d="M1 1h7l2 3H1z" fill="#e8b43a"/><path d="M1 4h16v12H1z" fill="#f6cf5a"/><path d="M5 9h8v7H5z" fill="#2a80c8"/><path d="M7 12h4v4H7z" fill="#f6cf5a"/></svg></span>
    <span class="tbi"><svg width="20" height="16" viewBox="0 0 20 16"><path d="M0 6 10 0l10 6v10H0z" fill="#3f3c38"/><path d="M3 4 10 1l7 3v2l-7 4-7-4z" fill="#f2efe8"/></svg></span>
    <span class="tbi"><svg width="20" height="20" viewBox="0 0 20 20"><circle cx="10" cy="11" r="9" fill="#f0642a"/><circle cx="10" cy="11" r="4.500" fill="#6a35c8"/><path d="M4 4c4-4 12-2 14 4-3-3-6-2-8 0z" fill="#f7b733"/></svg></span>
    <span class="tbi"><svg width="20" height="20" viewBox="0 0 20 20"><circle cx="10" cy="9" r="8.500" fill="#1c6f9f"/><path d="M4 5c3-3 8-2 9 2s-4 6-6 4-2-4-3-6z" fill="#55c078"/><circle cx="11" cy="9" r="4" fill="none" stroke="#f3e6a0" stroke-width="1.200"/><path d="M14 12l4 6" stroke="#d8a030" stroke-width="2"/></svg></span>
    <span class="tbi"><svg width="20" height="20" viewBox="0 0 20 20"><g fill="none" stroke="#2b2b2b" stroke-width="1.200"><ellipse cx="10" cy="5" rx="5" ry="4"/><ellipse cx="10" cy="15" rx="5" ry="4"/><ellipse cx="5" cy="7.500" rx="4" ry="5" transform="rotate(30 5 7.500)"/><ellipse cx="15" cy="7.500" rx="4" ry="5" transform="rotate(-30 15 7.500)"/><ellipse cx="5" cy="12.500" rx="4" ry="5" transform="rotate(-30 5 12.500)"/><ellipse cx="15" cy="12.500" rx="4" ry="5" transform="rotate(30 15 12.500)"/></g></svg></span>
    <span class="tbi"><svg width="20" height="20" viewBox="0 0 20 20"><path d="M1 4c7-3 13 0 18 5l-3 2C12 7 6 5 2 7z" fill="#9aa0a6"/><path d="M1 9c5-1 9 1 12 5l-3 2c-2-3-6-5-9-4z" fill="#c4c8cc"/><rect x="10" y="13" width="9" height="6" fill="#555"/></svg></span>
    <span class="tbi on act"><svg width="16" height="18" viewBox="0 0 16 18"><path d="M1 17 6 1h4l5 16h-4l-1-4H6l-1 4zM6.800 10h2.400L8 5z" fill="#b8232c"/></svg></span>
    <span class="tbi on"><svg width="26" height="24" viewBox="0 0 26 24"><path d="M3 20 4.500 15A8.500 8.500 0 1 1 8 18.500z" fill="none" stroke="#1f9a55" stroke-width="1.800"/><path d="M8 7c0 4 3 7 6 7l1.500-2-2-1-1 .8C11 11 10 10 9.500 8.500L10.300 7.500l-1-2z" fill="#1f9a55"/><circle cx="20" cy="18" r="5.500" fill="#c9c9c7" stroke="#666" stroke-width=".6"/><text x="20" y="21" class="badge-t">3</text></svg></span>
  </div>
  <div class="tray">
    <span class="weather"><svg width="21" height="22" viewBox="0 0 21 22"><circle cx="8" cy="9" r="6" fill="#f3b23c"/><path d="M3 21a4 4 0 0 1 0-8 6 6 0 0 1 11-1 4.500 4.500 0 0 1 2 9z" fill="#9cc1e8"/><circle cx="15" cy="5" r="5" fill="#d3252a"/><text x="15" y="8" class="badge-w">1</text></svg><span class="temp">15°C</span><span class="cond ar">غائم غالبًا</span></span>
    <svg class="chev" width="11" height="6" viewBox="0 0 11 6"><path d="M.5 5.500l5-5 5 5" fill="none" stroke="#222"/></svg>
    <svg width="14" height="11" viewBox="0 0 14 11"><path d="M1 1h10v9H1z" fill="none" stroke="#222"/><path d="M3 2h3v7H3z" fill="#222"/><path d="M12 3h2v5h-2z" fill="#222"/></svg>
    <svg width="15" height="15" viewBox="0 0 15 15"><circle cx="7.500" cy="7.500" r="7" fill="none" stroke="#222"/><ellipse cx="7.500" cy="7.500" rx="3" ry="7" fill="none" stroke="#222"/><path d="M1 5h13M1 10h13" stroke="#222"/></svg>
    <svg width="14" height="13" viewBox="0 0 14 13"><path d="M1 4h2l3-3v11L3 9H1z" fill="none" stroke="#222"/><path d="M8 4c1 1 1 4 0 5M11 2c2 2 2 7 0 9" fill="none" stroke="#222"/></svg>
    <span class="eng">ENG</span>
    <span class="clock"><span>11:47 AM</span><span>11/27/2024</span></span>
    <span class="notif"><svg width="24" height="24" viewBox="0 0 24 24"><path d="M2 2h15v12h-10l-2 3v-3H2z" fill="#1f1f1f"/><path d="M5 5h9M5 8h9M5 11h6" stroke="#e8e4dc"/><circle cx="15" cy="16" r="6.500" fill="#d9d7d3" stroke="#555" stroke-width=".6"/><text x="15" y="19.500" class="badge-t">11</text></svg></span>
  </div>
</div>
</body>
</html>
```

FILE: styles.css
```css
* { box-sizing: border-box; }
html, body { margin: 0; padding: 0; width: 1280px; height: 720px; overflow: hidden; }
body { font-family: Roboto, "Liberation Sans", "DejaVu Sans", sans-serif; font-size: 10px; color: #c8ccd2; background: #e8e4dc; }
svg { display: block; flex: none; }
.defs { position: absolute; }
.ar { font-family: "DejaVu Sans", sans-serif; }

.window { width: 1280px; height: 687px; border: 2px solid #2593c8; border-width: 2px 2px 1px 2px; background: #1f2631; display: flex; flex-direction: column; }

/* title bar */
.titlebar { height: 22px; display: flex; align-items: center; background: #1f2733; flex: none; }
.qat { display: flex; align-items: center; padding-left: 5px; width: 440px; }
.logo { margin-right: 4px; }
.qi { margin-left: 4px; }
.qi.first { margin-left: 8px; }
.qat .caret { margin-left: 5px; }
.qi.more { margin-left: 8px; margin-right: 2px; }
.share { margin-left: 4px; color: #7fb9de; font-size: 10px; }
.app-title { font-size: 10px; color: #cfd3d8; margin-left: 5px; width: 353px; white-space: nowrap; }
.infocenter { display: flex; align-items: center; }
.arrow-r { margin-right: 3px; }
.search-input { width: 149px; height: 17px; background: #3f4858; font-style: italic; font-size: 10px; color: #aab0b8; padding: 2px 3px; }
.mag { margin-left: 4px; }
.user { margin-left: 5px; }
.signin { margin-left: 5px; width: 71px; color: #c8ccd2; font-size: 10.500px; }
.cart { margin-left: 9px; }
.tri { margin-left: 5px; }
.c2 { margin-left: 4px; }
.vsep { width: 1px; height: 15px; background: #4a5260; margin-left: 8px; }
.help { width: 14px; height: 14px; border-radius: 50%; background: #b0b4b9; color: #333; font-weight: 700; font-size: 10px; text-align: center; line-height: 14px; margin-left: 8px; }
.c3 { margin-left: 6px; }
.winbtns { display: flex; align-items: center; margin-left: auto; gap: 11px; padding-right: 6px; }
.wmin { width: 8px; height: 2px; background: #c8ccd2; margin-top: 6px; }
.wmax { width: 13px; height: 11px; border: 1px solid #c8ccd2; }

/* ribbon tabs */
.tabs { height: 19px; display: flex; align-items: center; flex: none; background: #1f2733; padding-left: 5px; font-size: 9.700px; }
.tab { height: 19px; line-height: 21px; padding: 0 8.400px; color: #a7adb5; white-space: nowrap; }
.tab.active { background: #3a4454; color: #e4e6e9; border-radius: 2px 2px 0 0; padding: 0 6px 0 2px; margin-left: 6px; width: 36px; }
.tab.geo { background: #0f6a9c; color: #dcebf4; border: 1px solid #2e8dbd; border-bottom: 0; line-height: 19px; margin-left: 1px; padding: 0 7px; width: 70px; }
.tabmini { display: flex; align-items: center; gap: 5px; margin-left: 17px; }
.tabmini-box { width: 13px; height: 6px; background: #e8e9ea; }

/* ribbon */
.ribbon { height: 82px; flex: none; display: flex; background: #3a4454; }
.panel { display: flex; flex-direction: column; border-right: 1px solid #2d3542; flex: none; height: 82px; }
.p-draw { width: 187px; } .p-modify { width: 211px; } .p-annot { width: 141px; } .p-layers { width: 227px; }
.p-block { width: 67px; } .p-props { width: 184px; } .p-groups { width: 58px; } .p-util { width: 80px; } .p-clip { width: 66px; } .p-view { width: 53px; border-right: 0; }
.pbody { flex: 1; display: flex; padding-top: 3px; min-height: 0; }
.ptitle { height: 14px; margin-bottom: 1px; display: flex; align-items: center; justify-content: center; gap: 5px; position: relative; color: #c2c6cc; font-size: 10.200px; flex: none; }
.launch { position: absolute; right: 3px; top: 5px; }

.lg { display: flex; flex-direction: column; align-items: center; flex: none; line-height: 13px; font-size: 10px; letter-spacing: -.1px; white-space: nowrap; }
.lg > svg:first-child { margin-bottom: 1px; }
.lg .dd { margin-top: 3px; }
.w30 { width: 30px; margin-left: 4px; } .w34 { width: 34px; } .w36 { width: 36px; } .w38 { width: 38px; } .w44 { width: 44px; } .w50 { width: 50px; } .w52 { width: 52px; }
.p-draw .w36 { margin-left: 1px; }
.p-annot .w36 { margin-left: 1px; }
.bigA { font-family: "Liberation Sans", sans-serif; font-size: 36px; line-height: 32px; height: 33px; color: #e2e4e7; letter-spacing: 0; }
.col { display: grid; grid-auto-rows: 20px; flex: none; padding-top: 1px; }
.sm { display: flex; align-items: center; gap: 5px; white-space: nowrap; font-size: 10px; height: 20px; }
.sm .sc { margin-left: 3px; }
.sm .g9 { margin-left: 6px; }
.sm .g6 { margin-left: 2px; }
.c-draw { margin-left: 1px; }
.rows3 { display: grid; grid-template-columns: 61px 58px 64px auto; grid-auto-rows: 20px; padding: 4px 0 0 5px; align-content: start; }
.c-annot { margin-left: 3px; }
.layerctl { padding-top: 2px; display: flex; flex-direction: column; width: 171px; }
.layerctl .combo { margin-bottom: 2px; }
.combo { height: 17px; background: #4a5464; display: flex; align-items: center; position: relative; flex: none; margin-bottom: 3px; color: #d0d3d8; }
.combo-layer { gap: 5px; padding-left: 3px; }
.comboc { position: absolute; right: 3px; top: 7px; }
.swatch { width: 11px; height: 11px; background: #fff; border: 1px solid #222; flex: none; }
.swatch.big { width: 13px; height: 13px; margin-left: 10px; border: 0; }
.cname { margin-left: 8px; }
.cname2 { margin-left: 1px; }
.lw { width: 53px; height: 1px; background: #e5e6e8; margin-left: 3px; }
.layerrow { display: flex; gap: 4px; height: 20px; align-items: center; padding-left: 1px; }
.p-block .w38 { margin-left: 1px; }
.c-block { margin-left: 4px; }
.p-props .w50 { margin-left: 1px; }
.propcol { display: grid; grid-auto-rows: 20px; align-items: center; margin-left: 1px; padding-top: 1px; align-content: start; }
.combos { margin-left: 2px; width: 113px; padding-top: 2px; }
.p-groups .w34 { margin-left: 2px; }
.c-groups { margin-left: 3px; }
.sel { border: 1px solid #6aa8d8; background: #2f3f52; width: 19px; padding-left: 2px; height: 19px; }
.c-util { margin-left: 3px; }
.p-util .w50 { margin-left: 4px; }
.c-clip { margin-left: 3px; }

/* document tabs */
.doctabs { height: 23px; flex: none; display: flex; align-items: center; background: #1f2733; padding-left: 21px; font-size: 10px; gap: 4px; }
.doctab { width: 100px; height: 21px; margin-top: 2px; background: #2c3441; border-radius: 9px 9px 0 0; display: flex; align-items: center; padding: 2px 0 0 8px; color: #8d949d; }
.doctab.cur { background: #3a4454; width: 98px; color: #d8dbdf; gap: 9px; padding-left: 7px; }
.doctab .ar { font-size: 9.500px; }
.dx { color: #aeb4bb; font-size: 10px; }
.docplus { color: #aeb4bb; font-weight: 700; font-size: 13px; margin-left: 10px; }

/* workspace */
.workspace { flex: 1; display: flex; min-height: 0; border-top: 2px solid #3a4454; }
.taskpane { width: 188px; display: flex; flex-direction: column; flex: none; background: #1f2733; }
.tp-title { height: 20px; flex: none; display: flex; align-items: center; color: #d0d3d8; font-size: 10px; background: #2a303b; width: 168px; gap: 4px; padding-left: 8px; }
.tp-grip { width: 2px; height: 6px; border-left: 2px dotted #aeb4bb; }
.tp-main { flex: 1; display: flex; min-height: 0; }
.tp-body { width: 166px; margin-left: 2px; background: #3a4454; display: flex; flex-direction: column; padding: 3px 8px 13px; flex: none; }
.dm-row { display: flex; align-items: center; gap: 8px; height: 16px; margin: 2px 0 0 1px; color: #c8ccd2; font-size: 9.500px; white-space: nowrap; }
.dm-select { width: 86px; height: 14px; background: #4f5e73; color: #d5d8dc; display: flex; align-items: center; justify-content: space-between; padding: 0 3px 0 2px; font-size: 9px; }
.dm-tools { margin-top: 6px; height: 44px; border: 1px solid #2f3743; display: flex; padding: 8px 0 0 0; }
.dmt { display: flex; flex-direction: column; align-items: center; gap: 1px; font-size: 9px; color: #c8ccd2; width: 27px; flex: none; }
.dmt.off { color: #6d7581; }
.dm-tabs { display: flex; align-items: center; margin-top: 10px; height: 24px; font-size: 9.500px; }
.dm-tab { display: flex; align-items: center; gap: 4px; height: 24px; padding: 0 3px 0 1px; color: #aeb4bb; white-space: nowrap; }
.dm-tab.on { background: #232a34; width: 52px; }
.dm-sep { width: 1px; height: 22px; background: #6b737e; margin: 0 7px; }
.dm-tab:last-child { padding-left: 2px; }
.tree-frame { flex: 1; margin-top: 3px; border: 1px solid #6d7581; padding: 3px; min-height: 0; }
.tree { background: #f6f6f6; height: 100%; color: #333; font-size: 10px; overflow: hidden; white-space: nowrap; padding-top: 1px; }
.tr { display: flex; align-items: center; height: 24px; }
.r1 { padding: 0 0 0 8px; gap: 5px; }
.r2 { padding-left: 45px; gap: 5px; }
.cb { width: 12px; height: 12px; border: 1px solid #888; background: #fff; display: flex; align-items: center; justify-content: center; border-radius: 1px; flex: none; }
.white-swatch { width: 40px; height: 13px; background: #fff; margin-right: 4px; flex: none; }
.white-swatch.line { background: linear-gradient(#fff 6px, #ddd 6px, #ddd 7px, #fff 7px); }
.r1 em { font-size: 9.500px; }
.tp-side { flex: 1; display: flex; flex-direction: column; background: #3a4454; min-height: 0; }
.stab { width: 18px; background: #2a313c; border-radius: 0 3px 3px 0; display: flex; align-items: center; justify-content: center; color: #9aa0a8; font-size: 10.500px; flex: none; }
.stab b { font-weight: 400; writing-mode: vertical-rl; transform: rotate(180deg); white-space: nowrap; }
.stab.on { height: 98px; background: #3a4454; color: #c8ccd2; padding-top: 10px; }
.s2 { height: 108px; margin-top: 9px; }
.s3 { height: 96px; margin-top: 5px; }
.s4 { height: 107px; margin-top: 5px; }

/* canvas */
.canvas { flex: 1; position: relative; background: #212830; min-width: 0; border-bottom: 1px solid #3a4454; }
.vp-label { position: absolute; left: 3px; top: 4px; font-size: 10.300px; color: #c8ccd2; }
.drawing { position: absolute; left: 0; top: 0; }
.cad path, .cad circle { fill: none; stroke: #d9dbde; stroke-width: 1; vector-effect: non-scaling-stroke; stroke-linejoin: round; }
.xhair, .ucs { fill: none; stroke: #cfd2d6; stroke-width: 1; }
.ucs-t { fill: #b4b8bc; font-family: "Liberation Sans", sans-serif; font-size: 14px; }
.vp-ctrl { position: absolute; right: 10px; top: 6px; display: flex; align-items: center; gap: 8px; }
.vmin { width: 9px; height: 3px; background: #d8dadd; margin-top: 5px; }
.vmax { width: 8px; height: 8px; border: 1.500px solid #d8dadd; border-top-width: 3px; }
.navbar { position: absolute; right: 2px; top: 21px; width: 27px; height: 197px; background: #575f67; border-radius: 3px; display: flex; flex-direction: column; align-items: center; padding-top: 14px; gap: 5px; }
.navdot { width: 3px; height: 2px; background: #6e767e; display: block; }
.cmdline { position: absolute; left: 265px; bottom: 0; width: 558px; height: 22px; display: flex; }
.cmd-tools { width: 43px; background: #252c37; display: flex; align-items: center; padding-left: 1px; gap: 5px; flex: none; }
.wrench { margin-left: 4px; }
.cmd-grip { width: 3px; height: 15px; border-left: 3px dotted #8f97a1; }
.cmd-input { flex: 1; background: #bcbdbd; display: flex; align-items: center; padding-left: 4px; gap: 2px; position: relative; border-bottom: 1px solid #8a8c8e; }
.cmd-text { font-family: "Liberation Mono", monospace; font-style: italic; font-size: 10px; color: #666; margin: 1px 0 0 6px; }
.cmd-up { position: absolute; right: 4px; top: 9px; }

/* status bar */
.statusbar { height: 25px; flex: none; display: flex; align-items: center; justify-content: space-between; background: #1f2733; }
.ltabs { display: flex; align-items: center; height: 18px; padding-left: 12px; margin-top: -9px; font-size: 10px; gap: 2px; }
.ltab { height: 18px; line-height: 18px; padding: 0 8px; background: #2c3441; color: #8d949d; border-radius: 0 0 4px 4px; }
.ltab.on { background: #3a4454; color: #e4e6e9; font-weight: 700; padding: 0 10px; }
.ltab.plus { padding: 0 4px; font-weight: 700; color: #aeb4bb; margin-left: 6px; }
.stools { display: flex; align-items: center; height: 24px; gap: 1px; margin-right: 1px; margin-top: -2px; }
.sg { height: 24px; background: #3a4454; display: flex; align-items: center; padding: 0 3px; gap: 2px; white-space: nowrap; }
.sg-model { padding: 0 2px 0 1px; }
.polar { padding-right: 7px; }
.model { font-size: 10px; color: #e4e6e9; }
.dots { margin-left: 5px; }
.sd { margin-left: 3px; }
.sd.wide { margin-left: 6px; }
.ml { margin-left: 5px; }
.ml2 { margin-left: 10px; }
.hl { width: 19px; height: 24px; background: #3c78b4; display: flex; align-items: center; justify-content: center; }
.gap-l { margin-left: -1px; }
.scale { font-size: 9.500px; margin-left: 3px; color: #d5d8dc; }

/* taskbar */
.taskbar { height: 33px; display: flex; align-items: stretch; background: linear-gradient(90deg, #e6e6e6 0%, #ece6dd 50%, #ece4d7 100%); color: #222; }
.start { width: 41px; display: flex; align-items: center; justify-content: center; }
.searchbox { width: 239px; background: #fff; display: flex; align-items: center; gap: 9px; padding-left: 9px; font-size: 12px; color: #333; font-family: "Noto Sans", sans-serif; border-top: 1px solid #ddd; }
.tb-apps { display: flex; align-items: stretch; }
.tbi { width: 41.300px; display: flex; align-items: center; justify-content: center; border-bottom: 2px solid transparent; }
.tbi:first-child { width: 40px; }
.tbi:first-child + .tbi { margin-left: 2px; }
.tbi.on { border-bottom-color: #0f6fc0; }
.tbi.act { background: #f6f3ef; }
.badge-t { font-size: 8px; text-anchor: middle; fill: #222; font-family: "Liberation Sans", sans-serif; }
.badge-w { font-size: 8px; text-anchor: middle; fill: #fff; font-family: "Liberation Sans", sans-serif; }
.tray { flex: 1; display: flex; align-items: center; justify-content: flex-end; gap: 12px; }
.weather { display: flex; align-items: center; gap: 7px; margin-right: 12px; font-size: 11.500px; }
.temp { color: #222; }
.cond { font-size: 11px; }
.eng { font-size: 10px; }
.clock { display: flex; flex-direction: column; align-items: center; font-size: 9.800px; line-height: 15px; margin-left: -4px; }
.notif { margin: 0 15px 0 -3px; }
```
